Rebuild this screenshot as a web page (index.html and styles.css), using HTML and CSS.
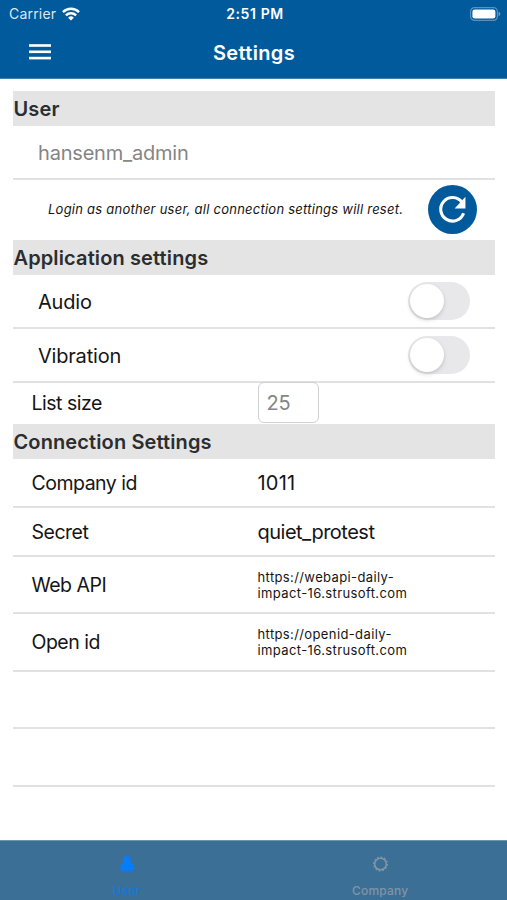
FILE: index.html
```html
<!DOCTYPE html>
<html lang="en">
<head>
    <meta charset="UTF-8">
    <meta name="viewport" content="width=device-width, initial-scale=1.0">
    <title>Settings</title>
    <link rel="stylesheet" href="styles.css">
</head>
<body>
<header>
    <div class="status-bar">
        <div class="carrier">
            <span>Carrier</span>
            <svg width="18" height="14" viewBox="0 0 18 14" fill="none" stroke="#fff" stroke-width="2.5">
                <path d="M1 5.1a11.4 11.4 0 0 1 16 0"/>
                <path d="M3.9 8.4a7.3 7.3 0 0 1 10.2 0"/>
                <path d="M9 13.6L6.1 10.7a4.2 4.2 0 0 1 5.8 0z" fill="#fff" stroke="none"/>
            </svg>
        </div>
        <span class="time">2:51 PM</span>
        <svg class="battery" width="31" height="14" viewBox="0 0 31 14">
            <rect x="0.6" y="0.6" width="26.8" height="12.8" rx="4" fill="none" stroke="#5b91c0" stroke-width="1.2"/>
            <rect x="2.4" y="2.4" width="23" height="9.2" rx="2.4" fill="#fff"/>
            <path d="M28.6 4.8q1.7.6 1.7 2.2t-1.7 2.2z" fill="#6f9fcb"/>
        </svg>
    </div>
    <div class="nav-bar">
        <svg class="menu" width="22" height="16" viewBox="0 0 22 16" fill="#fff">
            <rect y="0.2" width="22" height="2.6"/>
            <rect y="6.5" width="22" height="2.6"/>
            <rect y="12.8" width="22" height="2.6"/>
        </svg>
        <h1>Settings</h1>
    </div>
</header>

<main>
    <h2>User</h2>
    <div class="row user-row"><span class="username">hansenm_admin</span></div>
    <div class="row login-row">
        <em>Login as another user, all connection settings will reset.</em>
        <button class="reset">
            <svg width="49" height="49" viewBox="0 0 50 50">
                <path d="M34.6 17.6A12 12 0 1 0 36.3 28.8" fill="none" stroke="#fff" stroke-width="3.2"/>
                <path d="M38.2 12v12H27.2z" fill="#fff"/>
            </svg>
        </button>
    </div>

    <h2>Application settings</h2>
    <div class="row switch-row"><span>Audio</span><div class="switch"></div></div>
    <div class="row switch-row"><span>Vibration</span><div class="switch"></div></div>
    <div class="row size-row">
        <span class="label">List size</span>
        <div class="size-box">25</div>
    </div>

    <h2>Connection Settings</h2>
    <div class="row id-row"><span class="label">Company id</span><span class="number">1011</span></div>
    <div class="row id-row"><span class="label">Secret</span><span class="secret">quiet_protest</span></div>
    <div class="row tall-row"><span class="label">Web API</span><span class="url">https://webapi-daily-<br>impact-16.strusoft.com</span></div>
    <div class="row tall-row"><span class="label">Open id</span><span class="url">https://openid-daily-<br>impact-16.strusoft.com</span></div>
    <div class="row tall-row"></div>
    <div class="row tall-row"></div>
</main>

<footer>
    <div class="tab active">
        <svg width="16" height="18" viewBox="0 0 16 18" fill="#087cff">
            <rect x="4.2" y="1.2" width="7.6" height="8.4" rx="3.6"/>
            <rect x="1.5" y="8.6" width="13" height="7.6" rx="2.4"/>
        </svg>
        <span>User</span>
    </div>
    <div class="tab">
        <svg width="16" height="18" viewBox="0 0 16 18" fill="none" stroke="#8095a5">
            <circle cx="8.5" cy="9" r="5.8" stroke-width="1.6"/>
            <circle cx="8.5" cy="9" r="6.9" stroke-width="1.2" stroke-dasharray="1.8 1.8"/>
        </svg>
        <span>Company</span>
    </div>
</footer>
</body>
</html>
```
FILE: styles.css
```css
* {
    box-sizing: border-box;
}

body {
    margin: 0;
    height: 900px;
    display: flex;
    flex-direction: column;
    background-color: #fff;
    color: #151515;
    font-family: Inter, "Liberation Sans", sans-serif;
    font-size: 20px;
    letter-spacing: -0.2px;
    overflow: hidden;
}

/* Header */
header {
    height: 79px;
    flex: none;
    background-color: #015a9c;
    border-bottom: 1px solid #3c82b6;
    color: #fff;
}

.status-bar {
    display: grid;
    grid-template-columns: 1fr auto 1fr;
    align-items: center;
    height: 27px;
    padding: 0 6px 0 9px;
}

.carrier {
    display: flex;
    align-items: center;
    gap: 6px;
    color: #d9e8f4;
    font-size: 14px;
    letter-spacing: 0.2px;
}

.time {
    font-size: 14px;
    font-weight: 600;
    letter-spacing: 0.6px;
}

.battery {
    justify-self: end;
}

.nav-bar {
    display: grid;
    grid-template-columns: 1fr auto 1fr;
    align-items: center;
    height: 51px;
    padding: 0 28px 0 29px;
}

.menu {
    margin-bottom: 2px;
}

h1 {
    margin: 0;
    font-size: 20px;
    font-weight: 600;
    letter-spacing: 0.35px;
}

/* Settings list */
main {
    flex: 1;
    padding: 12px 12px 0 13px;
}

h2 {
    height: 34.5px;
    margin: 0;
    padding-left: 0.5px;
    background-color: #e4e4e4;
    color: #2b2d30;
    font-size: 20px;
    font-weight: 600;
    letter-spacing: 0.12px;
    line-height: 37px;
}

.row {
    display: flex;
    align-items: center;
    border-bottom: 2px solid #e1e1e1;
}

.user-row {
    height: 54.5px;
    padding: 2px 0 0 25px;
    color: #858585;
}

.login-row {
    height: 60px;
    justify-content: space-between;
    padding: 0 18.5px 1px 35px;
    border: none;
}

.login-row em {
    margin-bottom: 1px;
    font-size: 13px;
    letter-spacing: 0.24px;
}

.reset {
    width: 49px;
    height: 49px;
    padding: 0;
    border: none;
    border-radius: 50%;
    background-color: #015a9c;
}

.reset svg {
    display: block;
}

.switch-row {
    height: 54px;
    justify-content: space-between;
    padding: 0 25px;
}

.switch-row span {
    padding-top: 2px;
}

.switch {
    width: 62px;
    height: 38px;
    padding: 2px;
    border-radius: 19px;
    background-color: #e8e8ea;
}

.switch::before {
    content: "";
    display: block;
    width: 34px;
    height: 34px;
    border-radius: 50%;
    background-color: #fff;
    box-shadow: 0 2px 4px rgba(0, 0, 0, 0.16);
}

.label {
    width: 226px;
    font-size: 19.5px;
    letter-spacing: -0.5px;
}

.size-row,
.id-row,
.tall-row {
    padding-left: 18.5px;
}

.size-row {
    height: 41.8px;
    border: none;
}

.size-box {
    width: 61px;
    height: 41px;
    margin-bottom: 1px;
    padding-left: 8px;
    border: 1.5px solid #d0d0d0;
    border-radius: 6px;
    color: #858585;
    line-height: 40px;
}

.id-row {
    height: 49px;
    padding-top: 1px;
}

.number {
    letter-spacing: 0.2px;
}

.secret {
    letter-spacing: -0.5px;
}

.tall-row {
    height: 57.5px;
}

.url {
    font-size: 13px;
    letter-spacing: 0.38px;
    line-height: 16px;
}

/* Tabs */
footer {
    display: flex;
    flex: none;
    height: 60px;
    border-top: 1px solid #6f94ad;
    background-color: #3c6f96;
}

.tab {
    flex: 1;
    display: flex;
    flex-direction: column;
    align-items: center;
    padding-top: 14px;
    color: #8095a5;
    font-size: 12px;
    font-weight: 500;
    letter-spacing: 0.2px;
}

.tab span {
    margin-top: 10px;
    line-height: 16px;
}

.active {
    color: #1777d6;
}

.active span {
    font-weight: 600;
}
```
